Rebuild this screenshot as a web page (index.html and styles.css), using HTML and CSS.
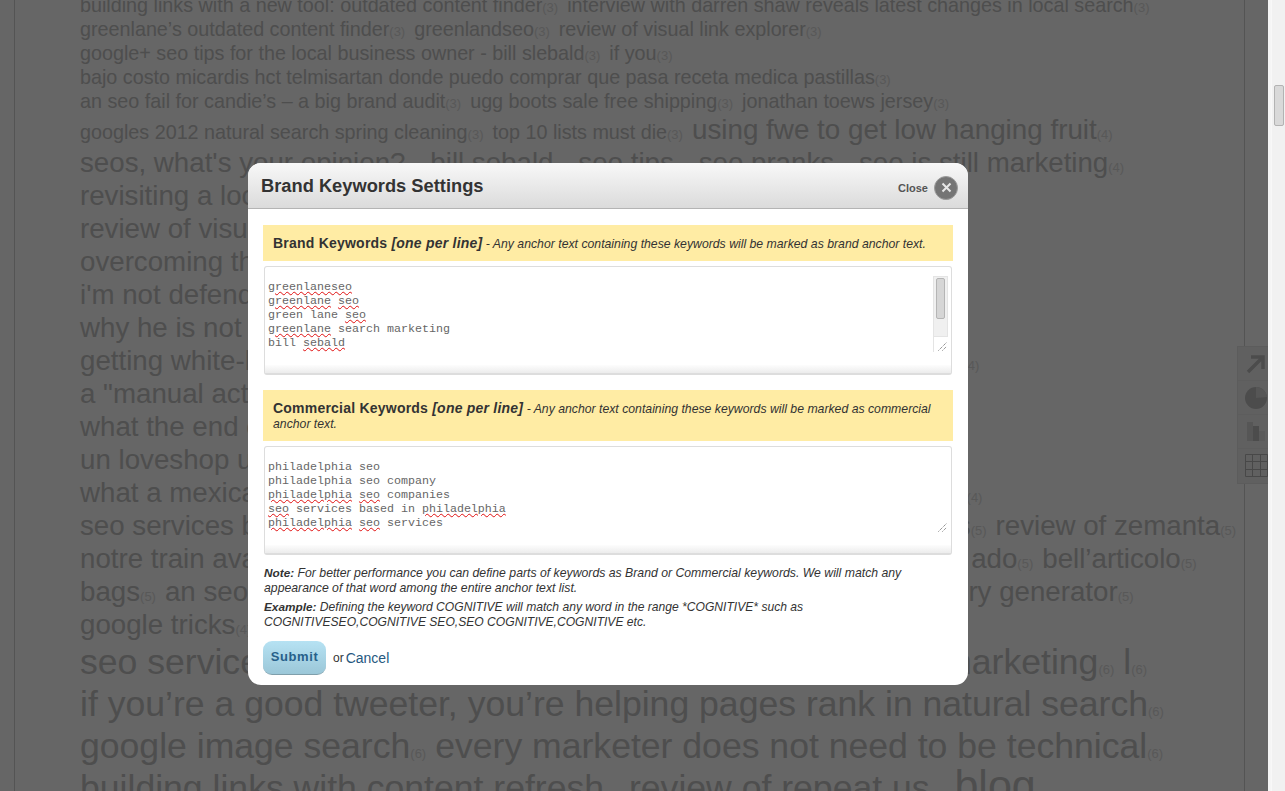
FILE: index.html
```html
<!DOCTYPE html>
<html lang="en">
<head>
<meta charset="utf-8">
<title>Brand Keywords Settings</title>
<link rel="stylesheet" href="styles.css">
</head>
<body>
<div class="page">
  <div class="column">
    <div class="cloud">
      <div class="line l3"><span class="t">building links with a new tool: outdated content finder<small>(3)</small></span><span class="t">interview with darren shaw reveals latest changes in local search<small>(3)</small></span></div>
      <div class="line l3"><span class="t">greenlane’s outdated content finder<small>(3)</small></span><span class="t">greenlandseo<small>(3)</small></span><span class="t">review of visual link explorer<small>(3)</small></span></div>
      <div class="line l3"><span class="t">google+ seo tips for the local business owner - bill slebald<small>(3)</small></span><span class="t">if you<small>(3)</small></span></div>
      <div class="line l3"><span class="t">bajo costo micardis hct telmisartan donde puedo comprar que pasa receta medica pastillas<small>(3)</small></span></div>
      <div class="line l3"><span class="t">an seo fail for candie’s – a big brand audit<small>(3)</small></span><span class="t">ugg boots sale free shipping<small>(3)</small></span><span class="t">jonathan toews jersey<small>(3)</small></span></div>
      <div class="line mixed"><span class="t">googles 2012 natural search spring cleaning<small>(3)</small></span><span class="t">top 10 lists must die<small>(3)</small></span><span class="t big">using fwe to get low hanging fruit<small>(4)</small></span></div>
      <div class="line l4"><span class="t">seos, what's your opinion?<small>(4)</small></span><span class="t">bill sebald<small>(4)</small></span><span class="t">seo tips<small>(4)</small></span><span class="t">seo pranks<small>(4)</small></span><span class="t">seo is still marketing<small>(4)</small></span></div>
      <div class="line l4"><span class="t">revisiting a local seo audit<small>(4)</small></span></div>
      <div class="line l4"><span class="t">review of visual link explorer<small>(4)</small></span></div>
      <div class="line l4"><span class="t">overcoming the content hurdle<small>(4)</small></span></div>
      <div class="line l4"><span class="t">i'm not defending google<small>(4)</small></span></div>
      <div class="line l4"><span class="t">why he is not an seo<small>(4)</small></span></div>
      <div class="line l4"><span class="t">getting white-hat links, from trusted local sites, and small business blogs<small>(4)</small></span></div>
      <div class="line l4"><span class="t">a "manual action" explained<small>(4)</small></span></div>
      <div class="line l4"><span class="t">what the end of the year means<small>(4)</small></span></div>
      <div class="line l4"><span class="t">un loveshop uno<small>(4)</small></span></div>
      <div class="line l4"><span class="t">what a mexican restaurant taught me about building a brand in the world<small>(4)</small></span></div>
      <div class="line l4"><span class="t">seo services based in philadelphia and in new jerseys with a local offices<small>(5)</small></span><span class="t">review of zemanta<small>(5)</small></span></div>
      <div class="line l4"><span class="t">notre train avance vers un monde complètement nouveau et très bien et ado<small>(5)</small></span><span class="t">bell’articolo<small>(5)</small></span></div>
      <div class="line l4"><span class="t">bags<small>(5)</small></span><span class="t">an seo guide to finding a great big new very long tail keyword query generator<small>(5)</small></span></div>
      <div class="line l4"><span class="t">google tricks<small>(4)</small></span></div>
      <div class="line l6"><span class="t">seo services that work with smart local content and on marketing<small>(6)</small></span><span class="t">l<small>(6)</small></span></div>
      <div class="line l6"><span class="t">if you’re a good tweeter, you’re helping pages rank in natural search<small>(6)</small></span></div>
      <div class="line l6"><span class="t">google image search<small>(6)</small></span><span class="t">every marketer does not need to be technical<small>(6)</small></span></div>
      <div class="line l6"><span class="t">building links with content refresh<small>(6)</small></span><span class="t">review of repeat us<small>(6)</small></span><span class="t huge">blog</span></div>
    </div>
  </div>

  <div class="tools">
    <div class="tool">
      <svg width="34" height="34" viewBox="0 0 34 34"><path class="ico-stroke" d="M10 25 L24 11 M13 10 H25 V22"/></svg>
    </div>
    <div class="tool">
      <svg width="34" height="34" viewBox="0 0 34 34"><circle class="ico-fill" cx="18" cy="17" r="11"/><path class="ico-soft" d="M18 17 V6 A11 11 0 0 1 29 16 Z"/></svg>
    </div>
    <div class="tool">
      <svg width="34" height="34" viewBox="0 0 34 34"><rect class="ico-soft" x="9" y="7" width="6" height="19"/><rect class="ico-fill" x="15" y="11" width="6" height="15"/><rect class="ico-pale" x="21" y="16" width="6" height="10"/></svg>
    </div>
    <div class="tool">
      <svg width="34" height="34" viewBox="0 0 34 34"><path class="ico-grid" d="M7.5 5.5 H29.5 V27.5 H7.5 Z M14.5 5.5 V27.5 M22.5 5.5 V27.5 M7.5 12.5 H29.5 M7.5 20.5 H29.5"/></svg>
    </div>
  </div>

  <div class="overlay"></div>

  <div class="modal">
    <div class="modal-head">
      <h1 class="modal-title">Brand Keywords Settings</h1>
      <div class="close">
        <span class="close-label">Close</span>
        <span class="close-btn">
          <svg width="11" height="11" viewBox="0 0 11 11"><path d="M1.5 1.5 L9.5 9.5 M9.5 1.5 L1.5 9.5"/></svg>
        </span>
      </div>
    </div>
    <div class="modal-body">
      <div class="notice"><b>Brand Keywords <i>[one per line]</i></b> <em>- Any anchor text containing these keywords will be marked as brand anchor text.</em></div>
      <div class="field">
        <div class="area"><span class="sp">greenlaneseo</span>
<span class="sp">greenlane</span> <span class="sp">seo</span>
green lane <span class="sp">seo</span>
<span class="sp">greenlane</span> search marketing
bill <span class="sp">sebald</span>
          <div class="vbar">
            <div class="vtrack"><div class="vthumb"></div></div>
            <div class="vcorner">
              <svg width="9" height="9" viewBox="0 0 9 9"><path d="M0.5 8.5 L8.5 0.5 M4.5 8.5 L8.5 4.5"/></svg>
            </div>
          </div>
        </div>
        <div class="field-foot"></div>
      </div>
      <div class="notice notice-2"><b>Commercial Keywords <i>[one per line]</i></b> <em>- Any anchor text containing these keywords will be marked as commercial anchor text.</em></div>
      <div class="field field-2">
        <div class="area">philadelphia seo
philadelphia seo company
<span class="sp">philadelphia</span> <span class="sp">seo</span> companies
<span class="sp">seo</span> services based in <span class="sp">philadelphia</span>
<span class="sp">philadelphia</span> <span class="sp">seo</span> services
          <div class="grip">
            <svg width="9" height="9" viewBox="0 0 9 9"><path d="M0.5 8.5 L8.5 0.5 M4.5 8.5 L8.5 4.5"/></svg>
          </div>
        </div>
        <div class="field-foot"></div>
      </div>
      <p class="note"><b>Note:</b> For better performance you can define parts of keywords as Brand or Commercial keywords. We will match any appearance of that word among the entire anchor text list.</p>
      <p class="note note-2"><b>Example:</b> Defining the keyword COGNITIVE will match any word in the range *COGNITIVE* such as COGNITIVESEO,COGNITIVE SEO,SEO COGNITIVE,COGNITIVE etc.</p>
      <div class="actions">
        <button class="submit" type="button">Submit</button>
        <span class="or">or</span>
        <a class="cancel" href="#">Cancel</a>
      </div>
    </div>
  </div>
</div>
<div class="scrollbar"><div class="scroll-thumb"></div></div>
</body>
</html>
```
FILE: styles.css
```css
* { box-sizing: border-box; }
html, body { margin: 0; height: 100%; overflow: hidden; }
body {
  display: flex;
  font-family: "Liberation Sans", Arial, sans-serif;
  background: #fff;
}
.page {
  position: relative;
  flex: 1;
  height: 791px;
  overflow: hidden;
  border-right: 3px solid #f5f5f5;
}
.scrollbar {
  width: 14px;
  height: 791px;
  background: #f1f1f1;
  border-left: 1px solid #f8f8f8;
  padding: 85px 2px 0 2px;
}
.scroll-thumb {
  width: 10px;
  height: 41px;
  background: #d9d9d9;
  border: 1px solid #b3b3b3;
  border-radius: 2px;
}
.column {
  width: 1231px;
  height: 791px;
  margin-left: 14px;
  border-left: 1px solid #d2d2d2;
  border-right: 1px solid #d2d2d2;
  padding-left: 65px;
  overflow: hidden;
}
.cloud { margin-top: -7px; color: #c3c3c3; white-space: nowrap; }
.line { display: block; }
.t { margin-right: 9px; }
.t small { font-size: 13px; line-height: 0; color: #dcdcdc; }
.l3 { font-size: 19.75px; line-height: 24px; }
.mixed { font-size: 19.75px; line-height: 39px; height: 33px; }
.l4 { font-size: 27.7px; line-height: 33px; }
.l6 { font-size: 35.6px; line-height: 42px; }
.big { font-size: 27.8px; line-height: 0; }
.huge { font-size: 43px; line-height: 0; }
.tools {
  position: absolute;
  left: 1237px;
  top: 346px;
  width: 34px;
  height: 138px;
  background: #f0f0f0;
  border: 1px solid #e6e6e6;
  border-right: 0;
}
.tool { height: 34px; display: flex; align-items: center; border-bottom: 1px solid #e8e8e8; }
.tool:last-child { border-bottom: 0; }
.tool svg { display: block; flex: none; }
.ico-stroke { fill: none; stroke: #bdbdbd; stroke-width: 3.5; }
.ico-fill { fill: #bdbdbd; }
.ico-soft { fill: #d6d6d6; }
.ico-pale { fill: #e2e2e2; }
.ico-grid { fill: none; stroke: #b4b4b4; stroke-width: 1; }
.overlay {
  position: absolute;
  inset: 0;
  background: rgba(0, 0, 0, 0.6);
}
.modal {
  position: absolute;
  left: 248px;
  top: 163px;
  width: 720px;
  height: 522px;
  background: #fff;
  border-radius: 13px;
  overflow: hidden;
}
.modal-head {
  height: 46px;
  display: flex;
  align-items: center;
  justify-content: space-between;
  padding: 0 10px 0 13px;
  background: linear-gradient(#f8f8f8, #dbdbdb);
  border-bottom: 1px solid #b4b4b4;
}
.modal-title { margin: 0; padding-top: 1px; font-size: 18.3px; font-weight: bold; color: #333; }
.close { display: flex; align-items: center; gap: 6px; padding-top: 4px; }
.close-label { font-size: 11px; font-weight: bold; color: #555; }
.close-btn {
  width: 24px;
  height: 24px;
  border-radius: 50%;
  background: #757575;
  border: 1px solid #9c9c9c;
  display: flex;
  align-items: center;
  justify-content: center;
}
.close-btn svg { fill: none; stroke: #e8e8e8; stroke-width: 2; }
.modal-body { padding: 16px 15px 0; }
.notice {
  background: #ffeca4;
  padding: 11px 10px 0;
  height: 36px;
  font-size: 12.25px;
  line-height: 15px;
  color: #333;
}
.notice b { font-size: 14px; letter-spacing: 0.22px; color: #333; }
.notice-2 { height: 51px; margin-top: 15px; }
.field {
  margin: 5px 0 0 1px;
  width: 688px;
  height: 109px;
  border: 1px solid #ddd;
  border-radius: 3px;
  border-bottom-width: 2px;
  background: #fff;
  position: relative;
}
.area {
  position: relative;
  height: 98px;
  padding: 13px 3px 0;
  font-family: "Liberation Mono", "Courier New", monospace;
  font-size: 11.67px;
  line-height: 14px;
  white-space: pre-line;
  color: #666;
}
.sp { text-decoration: underline wavy #e01010 1px; text-underline-offset: 1px; }
.field-foot { height: 8px; background: linear-gradient(#fdfdfd, #ececec); }
.vbar {
  position: absolute;
  right: 3px;
  top: 9px;
  width: 15px;
  height: 76px;
  display: flex;
  flex-direction: column;
  white-space: normal;
}
.vtrack {
  flex: 1;
  background: #f0f0f0;
  border: 1px solid #e4e4e4;
  padding: 1px 2px;
}
.vthumb {
  height: 41px;
  background: #d6d6d6;
  border: 1px solid #b5b5b5;
  border-radius: 2px;
}
.vcorner, .grip {
  height: 15px;
  display: flex;
  justify-content: flex-end;
  align-items: flex-end;
  padding: 0 1px 1px 0;
  background: #fff;
  white-space: normal;
}
.vcorner svg, .grip svg { fill: none; stroke: #666; stroke-width: 1; stroke-dasharray: 1 1; }
.vcorner { border-left: 1px solid #e4e4e4; }
.grip { position: absolute; right: 3px; bottom: 12px; width: 15px; }
.note {
  margin: 11px 0 0 1px;
  width: 680px;
  font-size: 12.25px;
  font-style: italic;
  line-height: 15px;
  color: #333;
}
.note b { font-size: 11.8px; }
.note-2 { margin-top: 4px; font-size: 12.1px; }
.actions { display: flex; align-items: center; margin-top: 11px; }
.submit {
  width: 63px;
  height: 34px;
  padding: 0 0 3px;
  border: 0;
  border-bottom: 1px solid #7f9fab;
  border-radius: 9px;
  background: linear-gradient(#b6e2f3, #9bc7d8);
  font-family: inherit;
  font-size: 13px;
  font-weight: bold;
  letter-spacing: 0.6px;
  color: #27608a;
}
.or { margin-left: 7px; font-size: 12px; color: #333; }
.cancel { margin-left: 2px; font-size: 14px; color: #26587f; text-decoration: none; }
```
